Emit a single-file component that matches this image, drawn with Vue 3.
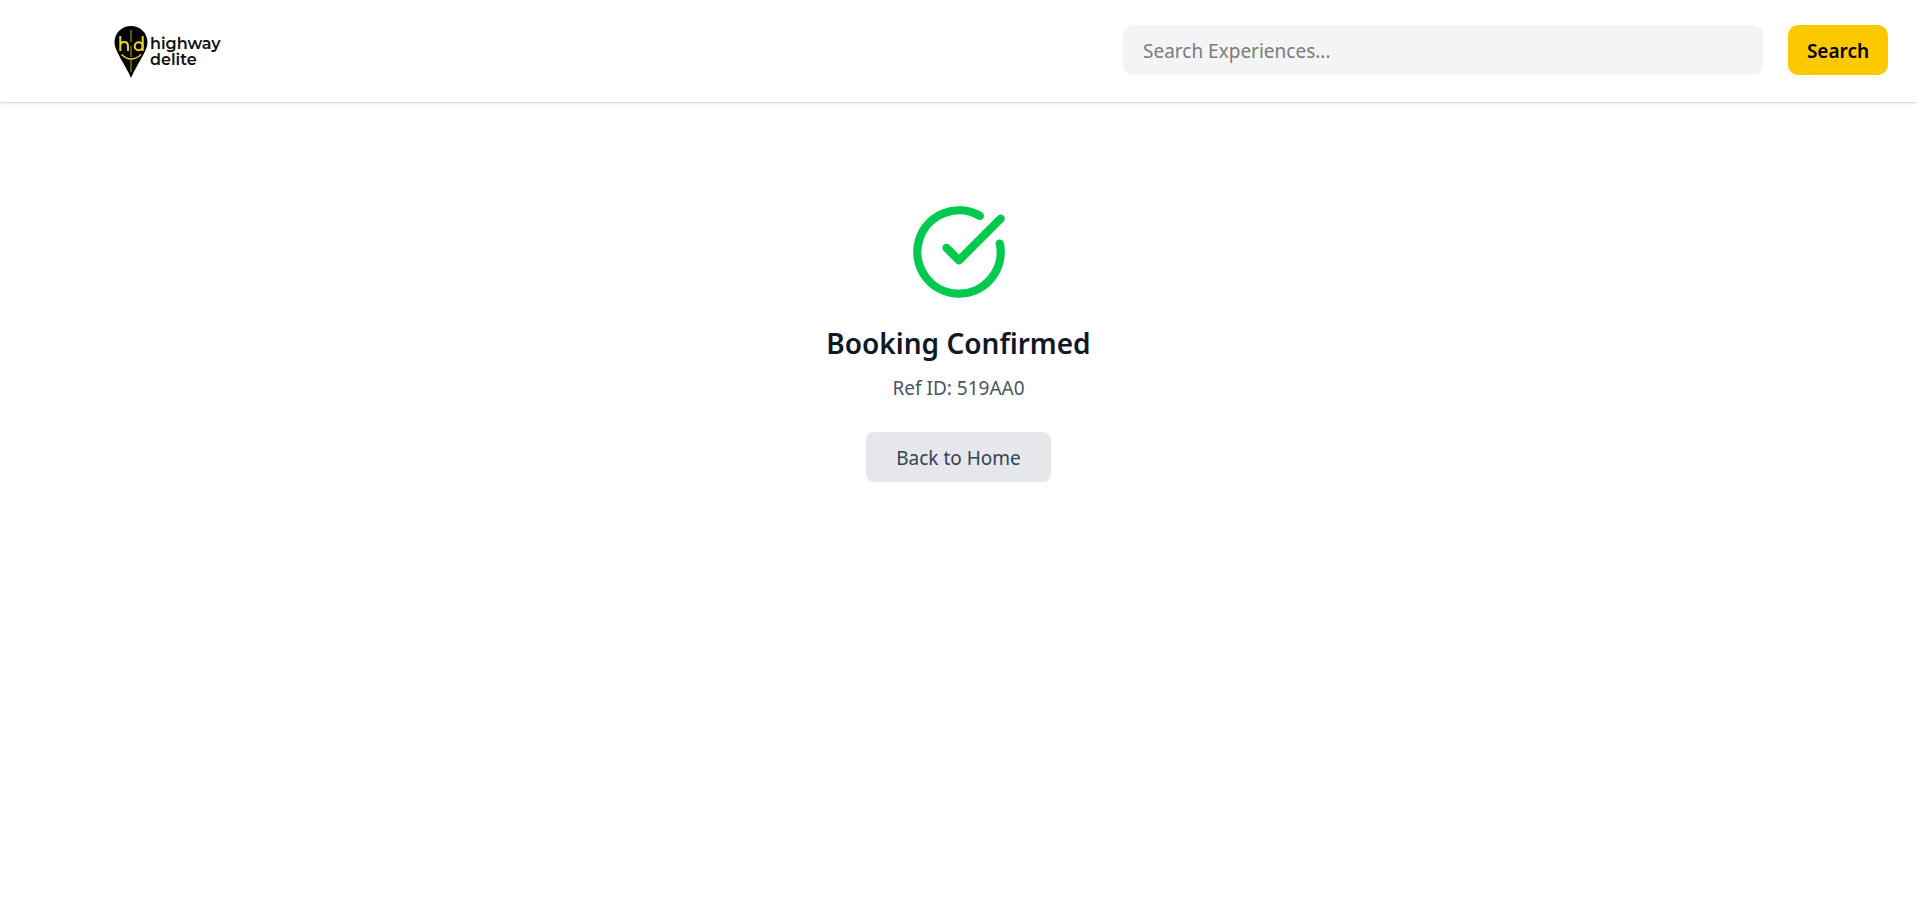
<script setup>
import { ref } from 'vue'

const query = ref('')
const refId = '519AA0'
</script>

<template>
  <div class="page">
    <header class="bar">
      <a class="brand" href="#" aria-label="highway delite">
        <svg class="pin" viewBox="0 0 34 52" aria-hidden="true">
          <path d="M17 0C7.500 0 .5 7 .5 16.500C.5 25 11 38 17 52C23 38 33.500 25 33.500 16.500C33.500 7 26.500 0 17 0Z" fill="#050505" />
          <g fill="none" stroke="#e6d52c" stroke-width="2">
            <path d="M6.300 10V25M6.300 20C6.300 14.500 14 14.500 14 20V25" />
            <circle cx="24.700" cy="20.200" r="4" />
            <path d="M28.700 10V25" />
            <path d="M7.500 28.500Q17 37.500 27 28.500" stroke-width="1.400" />
            <path d="M17 4V16M17 20V31M17 34V46" stroke="#b5a72c" stroke-width="1" />
          </g>
        </svg>
        <span class="brand-name">highway<br />delite</span>
      </a>
      <form class="search" role="search" @submit.prevent>
        <input v-model="query" class="field" type="text" placeholder="Search Experiences..." aria-label="Search Experiences" />
        <button class="go" type="submit">Search</button>
      </form>
    </header>

    <main class="result">
      <svg class="check" viewBox="0 0 24 24" aria-hidden="true">
        <path d="M21.801 10A10 10 0 1 1 17 3.335" />
        <path d="m9 11 3 3L22 4" />
      </svg>
      <h1 class="title">Booking Confirmed</h1>
      <p class="ref">Ref ID: {{ refId }}</p>
      <button class="home" type="button">Back to Home</button>
    </main>
  </div>
</template>

<style>
body {
  margin: 0;
  background: #fff;
}
</style>

<style scoped>
.page {
  font-family: "Segoe UI", "Noto Sans", "Open Sans", sans-serif;
  font-size: 19px;
  line-height: 32px;
}
.bar {
  display: flex;
  align-items: center;
  justify-content: space-between;
  box-sizing: border-box;
  height: 102px;
  padding: 0 29px 2px 114px;
  background: #fff;
  box-shadow: 0 1px 3px rgba(0, 0, 0, 0.1), 0 1px 2px rgba(0, 0, 0, 0.08);
}
.brand {
  display: flex;
  align-items: center;
  gap: 2px;
  padding-top: 4px;
  color: #111;
  text-decoration: none;
}
.pin {
  width: 34px;
  height: 52px;
}
.brand-name {
  font-family: Montserrat, Inter, sans-serif;
  font-size: 16px;
  font-weight: 600;
  line-height: 16px;
}
.search {
  display: flex;
  gap: 25px;
  width: 765px;
}
.field {
  flex: 1;
  min-width: 0;
  box-sizing: border-box;
  height: 50px;
  padding: 2px 20px 0;
  border: 0;
  border-radius: 10px;
  background: #f3f4f6;
  color: #111;
  font: inherit;
}
.field::placeholder {
  color: #7b7b7b;
  opacity: 1;
}
.go,
.home {
  height: 50px;
  border: 0;
  font: inherit;
  cursor: pointer;
}
.go {
  width: 100px;
  padding: 2px 0 0;
  border-radius: 10px;
  background: #fcc800;
  color: #000;
  font-weight: 600;
}
.result {
  display: flex;
  flex-direction: column;
  align-items: center;
  padding-top: 100px;
}
.check {
  width: 100px;
  height: 100px;
  margin-bottom: 20px;
  fill: none;
  stroke: #00c950;
  stroke-width: 2;
  stroke-linecap: round;
  stroke-linejoin: round;
}
.title {
  margin: 0 0 8px;
  color: #101828;
  font-size: 28px;
  font-weight: 600;
  line-height: 42px;
}
.ref {
  margin: 0 0 28px;
  color: #4a5565;
}
.home {
  padding: 2px 30px 0;
  border-radius: 8px;
  background: #e5e7eb;
  color: #364153;
}
</style>
